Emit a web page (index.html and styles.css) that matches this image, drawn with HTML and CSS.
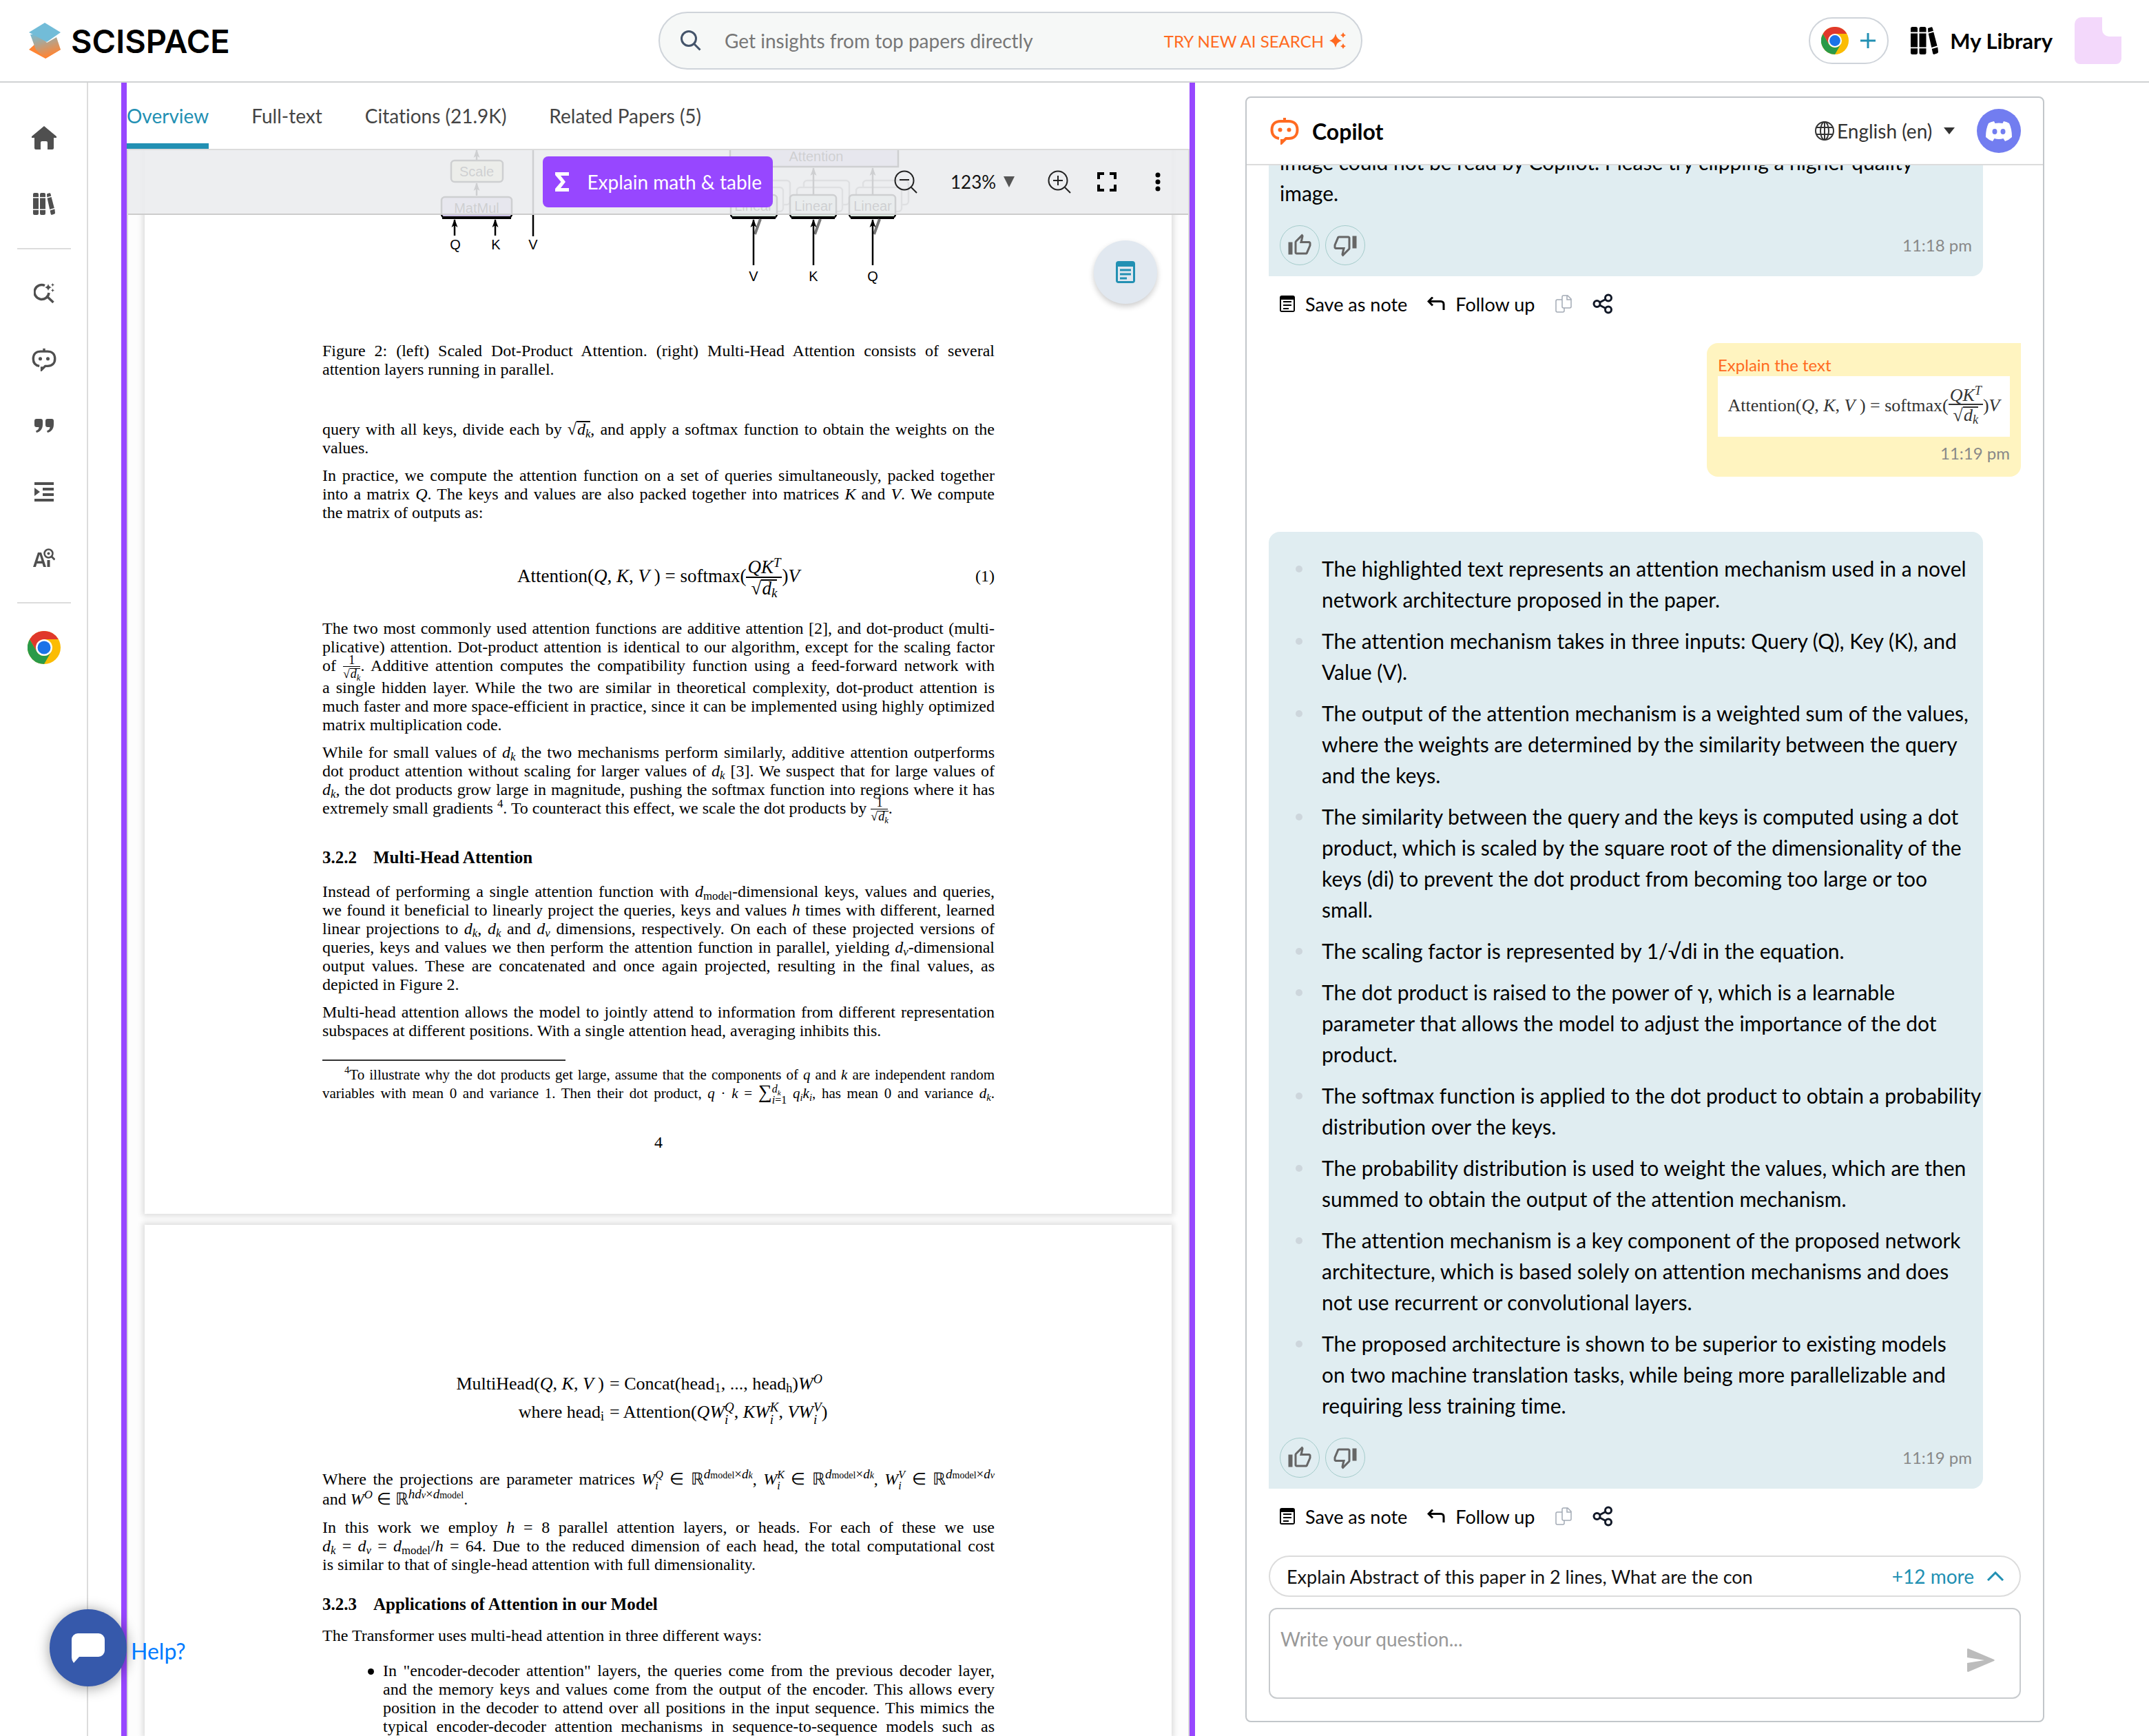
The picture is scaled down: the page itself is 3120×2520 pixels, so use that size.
FILE: index.html
```html
<!DOCTYPE html>
<html lang="en">
<head>
<meta charset="utf-8">
<title>SciSpace</title>
<link rel="stylesheet" href="styles.css">
</head>
<body>
<svg class="defs" aria-hidden="true">
  <defs>
    <linearGradient id="lg" x1="0" y1="0" x2="0.4" y2="1"><stop offset="0" stop-color="#74bcd6"/><stop offset="1" stop-color="#ff8534"/></linearGradient>
    <symbol id="chrome" viewBox="0 0 48 48">
      <circle cx="24" cy="24" r="24" fill="#fbbc04"/>
      <path d="M3.200 12L13.600 30A12 12 0 0 0 34.400 30L24 48A24 24 0 0 1 3.200 12z" fill="#2a9a48"/>
      <path d="M3.200 12A24 24 0 0 1 44.800 12H24L13.600 30z" fill="#e0382b"/>
      <circle cx="24" cy="24" r="12" fill="#fff"/>
      <circle cx="24" cy="24" r="9.500" fill="#1a73e8"/>
    </symbol>
    <symbol id="books" viewBox="0 0 32 32">
      <path d="M2 0h4a2 2 0 0 1 2 2v4H0V2a2 2 0 0 1 2-2zM0 7.500h8v16H0zM0 25h8v5a2 2 0 0 1-2 2H2a2 2 0 0 1-2-2zM12 0h4a2 2 0 0 1 2 2v4h-8V2a2 2 0 0 1 2-2zM10 7.500h8v16h-8zM10 25h8v5a2 2 0 0 1-2 2h-4a2 2 0 0 1-2-2zM20 1.500l3.500-1.200a1.500 1.500 0 0 1 1.900 1l.9 3.200-6 1.800zM20.600 7.800l6-1.800 4.200 16-6.600 2zM24.600 25.500l6.800-2 .6 5.500a2 2 0 0 1-1.400 1.800l-3 1a1.500 1.500 0 0 1-1.900-1z"/>
    </symbol>
    <symbol id="bot" viewBox="0 0 42 40">
      <path d="M21 1v5" stroke="currentColor" stroke-width="4" fill="none"/>
      <path d="M13 31C6 30 2.500 25 2.500 18.500C2.500 10 8 6 15 6h12c7 0 12.500 4 12.500 12.500S34 31 27 31h-4L17 37v-5" stroke="currentColor" stroke-width="4" fill="none"/>
      <circle cx="14.500" cy="18.500" r="3" fill="currentColor"/><circle cx="27.500" cy="18.500" r="3" fill="currentColor"/>
    </symbol>
    <symbol id="up" viewBox="0 0 24 24"><path d="M9 21h9c.83 0 1.540-.5 1.840-1.220l3.020-7.050c.09-.23.14-.47.14-.73v-2c0-1.100-.9-2-2-2h-6.310l.95-4.570.03-.32c0-.41-.17-.79-.44-1.060L14.170 1 7.580 7.590C7.220 7.950 7 8.450 7 9v10c0 1.100.9 2 2 2zM9 9l4.340-4.340L12 10h9v2l-3 7H9V9zM1 9h4v12H1z"/></symbol>
    <symbol id="down" viewBox="0 0 24 24"><path d="M15 3H6c-.83 0-1.540.5-1.840 1.220l-3.020 7.050c-.09.23-.14.47-.14.73v2c0 1.100.9 2 2 2h6.310l-.95 4.570-.03.32c0 .41.17.79.44 1.060L9.830 23l6.590-6.590c.36-.36.58-.86.58-1.410V5c0-1.100-.9-2-2-2zm0 12l-4.340 4.340L12 14H3v-2l3-7h9v10zm4-12h4v12h-4z"/></symbol>
    <symbol id="note" viewBox="0 0 22 24"><path fill-rule="evenodd" d="M3 0h16a3 3 0 0 1 3 3v18a3 3 0 0 1-3 3H3a3 3 0 0 1-3-3V3a3 3 0 0 1 3-3zM2 6v16h18V6zM5 8h12v2H5zM5 13h12v2H5zM5 18h8v2H5z"/></symbol>
    <symbol id="reply" viewBox="0 0 26 20"><path d="M8 0.500L2 6.500 8 12.500M2 6.500h18a4 4 0 0 1 4 4V19" fill="none" stroke="#000" stroke-width="3"/></symbol>
    <symbol id="copy" viewBox="0 0 26 26"><path d="M13 1h6l5 5v11a2 2 0 0 1-2 2H13a2 2 0 0 1-2-2V3a2 2 0 0 1 2-2zM18 1v6h6M11 7H4a2 2 0 0 0-2 2v14a2 2 0 0 0 2 2h8a2 2 0 0 0 2-2v-4" fill="none" stroke="#a3aab5" stroke-width="1.500"/></symbol>
    <symbol id="share" viewBox="0 0 30 30"><g fill="none" stroke="#111827" stroke-width="3"><circle cx="6.500" cy="15" r="4.500"/><circle cx="23" cy="6.500" r="4.500"/><circle cx="23" cy="23.500" r="4.500"/><path d="M10.500 13l8.500-4.500M10.500 17l8.500 4.500"/></g></symbol>
    <marker id="ah" viewBox="0 0 10 12" refX="5" refY="1" markerWidth="10" markerHeight="12" markerUnits="userSpaceOnUse"><path d="M5 0l4.500 12L5 9 .5 12z" fill="#000"/></marker>
  </defs>
</svg>

<header class="top">
  <a class="brand" href="#">
    <svg width="50" height="54" viewBox="0 0 50 54"><path d="M2 40L12 31l14 22zM48 40L26 53l14-24z" fill="#ff8534"/><path d="M4 18h14l10 12 14-8 6 18-22 13-14-13z" fill="url(#lg)"/><path d="M25 1l23 14-20 14L2 15z" fill="#72bcd8"/></svg>
    <span>SCISPACE</span>
  </a>
  <label class="search">
    <svg width="30" height="30" viewBox="0 0 30 30" fill="none" stroke="#44546a" stroke-width="3"><circle cx="12" cy="12" r="10.500"/><path d="M19.500 19.500l9 9"/></svg>
    <input type="text" placeholder="Get insights from top papers directly" aria-label="Search papers">
    <a href="#">TRY NEW AI SEARCH <svg width="24" height="24" viewBox="0 0 24 24" fill="#ff6a21"><path d="M9 2q1.800 8 9 10-7.200 2-9 10-1.800-8-9-10 7.200-2 9-10zM20 0q.8 3.200 4 4-3.200.8-4 4-.8-3.200-4-4 3.200-.8 4-4zM20 16q.8 3.200 4 4-3.200.8-4 4-.8-3.200-4-4 3.200-.8 4-4z"/></svg></a>
  </label>
  <nav class="account">
    <button class="ext" aria-label="Add to Chrome"><svg width="40" height="40"><use href="#chrome"/></svg><svg width="24" height="24" viewBox="0 0 24 24"><path d="M12 1v22M1 12h22" stroke="#2290b3" stroke-width="3"/></svg></button>
    <a class="library" href="#"><svg width="40" height="40"><use href="#books"/></svg>My Library</a>
    <svg class="avatar" width="68" height="68" viewBox="0 0 68 68"><path d="M10 0h30v18a10 10 0 0 0 10 10h18v32a8 8 0 0 1-8 8H8a8 8 0 0 1-8-8V10A10 10 0 0 1 10 0z" fill="#f3d8fb"/></svg>
  </nav>
</header>

<main class="shell">
  <nav class="side">
    <a href="#" aria-label="Home"><svg width="36" height="34" viewBox="0 0 36 34"><path d="M18 0L36 15v2h-4v15a2 2 0 0 1-2 2h-7V24a2 2 0 0 0-2-2h-6a2 2 0 0 0-2 2v10H6a2 2 0 0 1-2-2V17H0v-2z"/></svg></a>
    <a href="#" aria-label="Library"><svg width="32" height="32"><use href="#books"/></svg></a>
    <hr>
    <a href="#" aria-label="AI search"><svg width="30" height="30" viewBox="0 0 30 30"><path d="M16 3.500A10.500 10.500 0 1 0 22 14M20 20l8.500 8" fill="none" stroke="#4f4f4f" stroke-width="3.500"/><path d="M21 1q1 4.500 5 5-4 1-5 5-1-4-5-5 4-.5 5-5zM27.500 0l.8 1.700 1.700.8-1.700.8-.8 1.700-.8-1.700-1.700-.8 1.700-.8zM27.500 8l.8 1.700 1.700.8-1.700.8-.8 1.700-.8-1.700-1.700-.8 1.700-.8z"/></svg></a>
    <a href="#" aria-label="Copilot"><svg width="36" height="34"><use href="#bot"/></svg></a>
    <a href="#" aria-label="Citations"><svg width="28" height="20" viewBox="0 0 28 20"><path d="M3 0h6a3 3 0 0 1 3 3v5c0 7-4 11-9 12l-1-2.500c3-1 4.500-3 4.500-5.500H3a3 3 0 0 1-3-3V3a3 3 0 0 1 3-3zM19 0h6a3 3 0 0 1 3 3v5c0 7-4 11-9 12l-1-2.500c3-1 4.500-3 4.500-5.500H19a3 3 0 0 1-3-3V3a3 3 0 0 1 3-3z"/></svg></a>
    <a href="#" aria-label="Paraphraser"><svg width="28" height="28" viewBox="0 0 28 28"><path d="M0 0h28v4H0zM12 8h16v4H12zM12 16h16v4H12zM0 24h28v4H0zM0 8l8 6-8 6z"/></svg></a>
    <a href="#" aria-label="AI detector"><svg width="32" height="28" viewBox="0 0 32 28"><path fill-rule="evenodd" d="M0 27L7 6h5l7 21h-4l-1.500-5h-8L4 27zM6.500 18.500h6L9.500 9zM20.500 17h4v10h-4z"/><circle cx="22.500" cy="7.500" r="6" fill="none" stroke="#4f4f4f" stroke-width="2.500"/><circle cx="22.500" cy="7.500" r="2"/><path d="M27 12l4.500 4.500" stroke="#4f4f4f" stroke-width="3"/></svg></a>
    <hr>
    <a href="#" aria-label="Chrome extension"><svg width="48" height="48"><use href="#chrome"/></svg></a>
  </nav>

  <section class="reader">
    <nav class="tabs"><a class="on" href="#">Overview</a><a href="#">Full-text</a><a href="#">Citations (21.9K)</a><a href="#">Related Papers (5)</a></nav>
    <div class="viewer">
      <div class="toolbar">
        <button class="explain"><svg width="24" height="28" viewBox="0 0 24 28"><path d="M2 0h20v5H10l7 9-7 9h12v5H2v-4l8.500-10L2 4z" fill="#fff"/></svg>Explain math &amp; table</button>
        <div class="tools">
          <button aria-label="Zoom out"><svg width="34" height="34" viewBox="0 0 34 34" fill="none" stroke="#222" stroke-width="2"><circle cx="15" cy="15" r="13.500"/><path d="M8 14h14M25 25l8 8"/></svg></button>
          <span class="zoom"><select aria-label="Zoom level"><option>123%</option></select><svg width="16" height="16" viewBox="0 0 16 16"><path d="M0 0h16L8 16z" fill="#555"/></svg></span>
          <button aria-label="Zoom in"><svg width="34" height="34" viewBox="0 0 34 34" fill="none" stroke="#222" stroke-width="2"><circle cx="15" cy="15" r="13.500"/><path d="M8 15h14M15 8v14M25 25l8 8"/></svg></button>
          <button class="screen" aria-label="Full screen"><svg width="28" height="28" viewBox="0 0 28 28" fill="none" stroke="#000" stroke-width="4"><path d="M2 10V2h8M18 2h8v8M26 18v8h-8M10 26H2v-8"/></svg></button>
          <button aria-label="More"><svg width="8" height="28" viewBox="0 0 8 28"><circle cx="4" cy="4" r="3.500"/><circle cx="4" cy="14" r="3.500"/><circle cx="4" cy="24" r="3.500"/></svg></button>
        </div>
      </div>
      <button class="notes" aria-label="Notes"><svg width="28" height="32" viewBox="0 0 28 32"><rect width="28" height="32" rx="4" fill="#2290b3"/><path d="M3 8h22v21H3z" fill="#e1e8f0"/><path d="M6 13h16M6 19h16M6 25h10" stroke="#2290b3" stroke-width="3"/></svg></button>

      <article class="page first">
        <svg class="figure" width="976" height="278" viewBox="468 218 976 278" font-family="Liberation Sans" font-size="20" text-anchor="middle">
          <g fill="none" stroke="#000" stroke-width="2.500">
            <rect x="655" y="233" width="75" height="31" rx="5" fill="#f4f6c8"/>
            <rect x="641" y="286" width="102" height="30" rx="5" fill="#cfc4ea"/>
            <path d="M642 316h100" stroke-width="4"/>
            <g marker-end="url(#ah)"><path d="M692 284v-18"/><path d="M692 232v-14"/><path d="M660 342v-23"/><path d="M719 342v-23"/></g>
            <path d="M774 218v125"/>
            <path d="M1060 200h244v42h-244z" fill="#cfc4ea"/>
            <g fill="#fff" stroke="#888"><rect x="1081" y="262" width="66" height="35" rx="5"/><rect x="1167" y="262" width="66" height="35" rx="5"/><rect x="1253" y="262" width="66" height="35" rx="5"/><rect x="1071" y="272" width="66" height="35" rx="5"/><rect x="1157" y="272" width="66" height="35" rx="5"/><rect x="1243" y="272" width="66" height="35" rx="5"/></g>
            <g fill="#dcebe2"><rect x="1061" y="283" width="67" height="33" rx="5"/><rect x="1147" y="283" width="67" height="33" rx="5"/><rect x="1233" y="283" width="67" height="33" rx="5"/></g>
            <path d="M1063 316h63M1149 316h63M1235 316h63" stroke-width="4"/>
            <path d="M1104 318l-8 22M1191 318l-8 22M1277 318l-8 22" stroke="#777" stroke-width="4"/>
            <g marker-end="url(#ah)"><path d="M1181 282v-38"/><path d="M1267 282v-38"/><path d="M1094 385v-66"/><path d="M1181 385v-66"/><path d="M1267 385v-66"/></g>
          </g>
          <text x="692" y="256">Scale</text><text x="692" y="309">MatMul</text>
          <text x="661" y="362">Q</text><text x="720" y="362">K</text><text x="774" y="362">V</text>
          <text x="1185" y="234">Attention</text>
          <text x="1094" y="306">Linear</text><text x="1181" y="306">Linear</text><text x="1267" y="306">Linear</text>
          <text x="1094" y="408">V</text><text x="1181" y="408">K</text><text x="1267" y="408">Q</text>
        </svg>
        <p><span>Figure 2: (left) Scaled Dot-Product Attention. (right) Multi-Head Attention consists of several</span><span>attention layers running in parallel.</span></p>
        <p class="after-fig"><span>query with all keys, divide each by <span class="rt">√<i>d<sub>k</sub></i></span>, and apply a softmax function to obtain the weights on the</span><span>values.</span></p>
        <p><span>In practice, we compute the attention function on a set of queries simultaneously, packed together</span><span>into a matrix <i>Q</i>. The keys and values are also packed together into matrices <i>K</i> and <i>V</i>. We compute</span><span>the matrix of outputs as:</span></p>
        <div class="eq"><b></b><div class="formula">Attention(<i>Q</i>, <i>K</i>, <i>V</i> ) = softmax(<span class="fr"><span><i>QK<sup>T</sup></i></span><span class="rt">√<i>d<sub>k</sub></i></span></span>)<i>V</i></div><div>(1)</div></div>
        <p><span>The two most commonly used attention functions are additive attention [2], and dot-product (multi-</span><span>plicative) attention. Dot-product attention is identical to our algorithm, except for the scaling factor</span><span class="tall">of <span class="fr sm"><span>1</span><span class="rt">√<i>d<sub>k</sub></i></span></span>. Additive attention computes the compatibility function using a feed-forward network with</span><span>a single hidden layer. While the two are similar in theoretical complexity, dot-product attention is</span><span>much faster and more space-efficient in practice, since it can be implemented using highly optimized</span><span>matrix multiplication code.</span></p>
        <p><span>While for small values of <i>d<sub>k</sub></i> the two mechanisms perform similarly, additive attention outperforms</span><span>dot product attention without scaling for larger values of <i>d<sub>k</sub></i> [3]. We suspect that for large values of</span><span><i>d<sub>k</sub></i>, the dot products grow large in magnitude, pushing the softmax function into regions where it has</span><span>extremely small gradients <sup>4</sup>. To counteract this effect, we scale the dot products by <span class="fr sm"><span>1</span><span class="rt">√<i>d<sub>k</sub></i></span></span>.</span></p>
        <h3><span>3.2.2</span>Multi-Head Attention</h3>
        <p><span>Instead of performing a single attention function with <i>d</i><sub>model</sub>-dimensional keys, values and queries,</span><span>we found it beneficial to linearly project the queries, keys and values <i>h</i> times with different, learned</span><span>linear projections to <i>d<sub>k</sub></i>, <i>d<sub>k</sub></i> and <i>d<sub>v</sub></i> dimensions, respectively. On each of these projected versions of</span><span>queries, keys and values we then perform the attention function in parallel, yielding <i>d<sub>v</sub></i>-dimensional</span><span>output values. These are concatenated and once again projected, resulting in the final values, as</span><span>depicted in Figure 2.</span></p>
        <p><span>Multi-head attention allows the model to jointly attend to information from different representation</span><span>subspaces at different positions. With a single attention head, averaging inhibits this.</span></p>
        <p class="foot"><span class="ind"><sup>4</sup>To illustrate why the dot products get large, assume that the components of <i>q</i> and <i>k</i> are independent random</span><span class="just">variables with mean 0 and variance 1. Then their dot product, <i>q</i> · <i>k</i> = <span class="sum">∑</span><span class="ss"><i>d<sub>k</sub></i><span><i>i</i>=1</span></span> <i>q<sub>i</sub>k<sub>i</sub></i>, has mean 0 and variance <i>d<sub>k</sub></i>.</span></p>
        <div class="num">4</div>
      </article>

      <article class="page second">
        <div class="multi">
          <div>MultiHead(<i>Q</i>, <i>K</i>, <i>V</i> )</div><div>= Concat(head<sub>1</sub>, ..., head<sub>h</sub>)<i>W<sup>O</sup></i></div>
          <div>where head<sub>i</sub></div><div>= Attention(<i>QW</i><span class="ss"><i>Q</i><i>i</i></span>, <i>KW</i><span class="ss"><i>K</i><i>i</i></span>, <i>VW</i><span class="ss"><i>V</i><i>i</i></span>)</div>
        </div>
        <p><span class="just">Where the projections are parameter matrices <i>W</i><span class="ss"><i>Q</i><i>i</i></span> ∈ ℝ<sup class="dim"><i>d</i><small>model</small>×<i>d<small>k</small></i></sup>, <i>W</i><span class="ss"><i>K</i><i>i</i></span> ∈ ℝ<sup class="dim"><i>d</i><small>model</small>×<i>d<small>k</small></i></sup>, <i>W</i><span class="ss"><i>V</i><i>i</i></span> ∈ ℝ<sup class="dim"><i>d</i><small>model</small>×<i>d<small>v</small></i></sup></span><span>and <i>W<sup>O</sup></i> ∈ ℝ<sup class="dim"><i>hd<small>v</small></i>×<i>d</i><small>model</small></sup>.</span></p>
        <p><span>In this work we employ <i>h</i> = 8 parallel attention layers, or heads. For each of these we use</span><span><i>d<sub>k</sub></i> = <i>d<sub>v</sub></i> = <i>d</i><sub>model</sub>/<i>h</i> = 64. Due to the reduced dimension of each head, the total computational cost</span><span>is similar to that of single-head attention with full dimensionality.</span></p>
        <h3><span>3.2.3</span>Applications of Attention in our Model</h3>
        <p><span>The Transformer uses multi-head attention in three different ways:</span></p>
        <ul><li><p><span>In "encoder-decoder attention" layers, the queries come from the previous decoder layer,</span><span>and the memory keys and values come from the output of the encoder. This allows every</span><span>position in the decoder to attend over all positions in the input sequence. This mimics the</span><span class="just">typical encoder-decoder attention mechanisms in sequence-to-sequence models such as</span></p></li></ul>
      </article>
    </div>
  </section>

  <aside class="copilot">
    <header>
      <svg class="bot" width="42" height="40"><use href="#bot"/></svg><h2>Copilot</h2>
      <label class="lang"><svg width="28" height="28" viewBox="0 0 28 28" fill="none" stroke="#333" stroke-width="2"><circle cx="14" cy="14" r="13"/><ellipse cx="14" cy="14" rx="6" ry="13"/><path d="M14 1v26M2 9h24M2 19h24"/></svg><select aria-label="Language"><option>English (en)</option></select><svg width="16" height="10" viewBox="0 0 16 10"><path d="M0 0h16L8 10z" fill="#333"/></svg></label>
      <a class="discord" href="#" aria-label="Discord"><svg width="38" height="30" viewBox="0 0 38 30"><path d="M12 1Q7 2 4 4 0 12 0 24q4 4 10 6l2.500-4q6.500 2 13 0L28 30q6-2 10-6 0-12-4-20-3-2-8-3l-1.500 3q-5.500-1-11 0z" fill="#fff"/><ellipse cx="13" cy="16" rx="3.500" ry="4" fill="#727df0"/><ellipse cx="25" cy="16" rx="3.500" ry="4" fill="#727df0"/></svg></a>
    </header>
    <div class="chat">
      <div class="msg">
        <p>image could not be read by Copilot. Please try clipping a higher quality<br>image.</p>
        <div class="meta"><button aria-label="Like"><svg width="36" height="36"><use href="#up"/></svg></button><button aria-label="Dislike"><svg width="36" height="36"><use href="#down"/></svg></button><time>11:18 pm</time></div>
      </div>
      <div class="acts"><button><svg width="22" height="24"><use href="#note"/></svg>Save as note</button><button><svg width="26" height="20"><use href="#reply"/></svg>Follow up</button><button aria-label="Copy"><svg width="26" height="26"><use href="#copy"/></svg></button><button aria-label="Share"><svg width="30" height="30"><use href="#share"/></svg></button></div>
      <div class="mine"><div class="ask">Explain the text</div>
        <div class="clip">Attention(<i>Q</i>, <i>K</i>, <i>V</i> ) = softmax(<span class="fr"><span><i>QK<sup>T</sup></i></span><span class="rt">√<i>d<sub>k</sub></i></span></span>)<i>V</i></div>
        <time>11:19 pm</time></div>
      <div class="msg">
        <ul>
          <li>The highlighted text represents an attention mechanism used in a novel<br>network architecture proposed in the paper.</li>
          <li>The attention mechanism takes in three inputs: Query (Q), Key (K), and<br>Value (V).</li>
          <li>The output of the attention mechanism is a weighted sum of the values,<br>where the weights are determined by the similarity between the query<br>and the keys.</li>
          <li>The similarity between the query and the keys is computed using a dot<br>product, which is scaled by the square root of the dimensionality of the<br>keys (di) to prevent the dot product from becoming too large or too<br>small.</li>
          <li>The scaling factor is represented by 1/√di in the equation.</li>
          <li>The dot product is raised to the power of γ, which is a learnable<br>parameter that allows the model to adjust the importance of the dot<br>product.</li>
          <li>The softmax function is applied to the dot product to obtain a probability<br>distribution over the keys.</li>
          <li>The probability distribution is used to weight the values, which are then<br>summed to obtain the output of the attention mechanism.</li>
          <li>The attention mechanism is a key component of the proposed network<br>architecture, which is based solely on attention mechanisms and does<br>not use recurrent or convolutional layers.</li>
          <li>The proposed architecture is shown to be superior to existing models<br>on two machine translation tasks, while being more parallelizable and<br>requiring less training time.</li>
        </ul>
        <div class="meta"><button aria-label="Like"><svg width="36" height="36"><use href="#up"/></svg></button><button aria-label="Dislike"><svg width="36" height="36"><use href="#down"/></svg></button><time>11:19 pm</time></div>
      </div>
      <div class="acts"><button><svg width="22" height="24"><use href="#note"/></svg>Save as note</button><button><svg width="26" height="20"><use href="#reply"/></svg>Follow up</button><button aria-label="Copy"><svg width="26" height="26"><use href="#copy"/></svg></button><button aria-label="Share"><svg width="30" height="30"><use href="#share"/></svg></button></div>
    </div>
    <button class="suggest"><span class="q">Explain Abstract of this paper in 2 lines, What are the con</span><span class="m">+12 more</span><svg width="26" height="14" viewBox="0 0 26 14"><path d="M2 13L13 2l11 11" fill="none" stroke="#2290b3" stroke-width="3"/></svg></button>
    <div class="write"><textarea placeholder="Write your question..." aria-label="Your question"></textarea><button aria-label="Send"><svg width="40" height="34" viewBox="0 0 40 34"><path d="M0 1.500Q0-.5 2 .3L39 16q1.500 1 0 2L2 33.700Q0 34.500 0 32.500V21l25-4L0 13z" fill="#bcbcbc"/></svg></button></div>
  </aside>
</main>

<div class="help"><button aria-label="Open chat"><svg width="48" height="43" viewBox="0 0 48 43"><path d="M9 0h30a9 9 0 0 1 9 9v16a9 9 0 0 1-9 9H11L3 43Q0 39 0 35V9a9 9 0 0 1 9-9z" fill="#fff"/></svg></button><a href="#">Help?</a></div>
</body>
</html>
```
FILE: styles.css
```css
* { box-sizing: border-box; }
:root { --teal: #2290b3; --orange: #ff6a21; --line: #dcdcdc; --grey: #4f4f4f; }
body { margin: 0; height: 100vh; overflow: hidden; display: flex; flex-direction: column; background: #fff; color: #111; font-family: Lato, "Open Sans", sans-serif; font-size: 28px; font-variant-ligatures: none; }
button, input, select, textarea { font: inherit; color: inherit; background: none; border: 0; padding: 0; margin: 0; }
button { display: flex; align-items: center; }
a { color: inherit; text-decoration: none; }
svg { display: block; flex: none; }
.defs { position: absolute; width: 0; height: 0; }

.top { flex: none; height: 120px; border-bottom: 2px solid #d0d2d3; display: grid; grid-template-columns: 916px 1022px 1fr; align-items: center; padding: 0 40px; }
.brand { display: flex; align-items: center; gap: 13px; font-family: Inter, sans-serif; font-size: 47px; font-weight: 600; color: #000; }
.search { height: 84px; border: 2px solid #cfd4da; border-radius: 42px; background: #f6f8f7; display: flex; align-items: center; padding: 0 22px 0 30px; }
.search input { flex: 1; margin-left: 34px; outline: 0; }
.search input::placeholder { color: #777; opacity: 1; }
.search a { display: flex; align-items: center; gap: 8px; color: var(--orange); font-size: 24px; }
.account { display: flex; align-items: center; justify-content: flex-end; gap: 32px; }
.ext { height: 68px; border: 2px solid #cfd4da; border-radius: 34px; padding: 0 16px; gap: 16px; }
.library { display: flex; align-items: center; gap: 17px; font-weight: 700; font-size: 31px; color: #000; }

.shell { flex: 1; min-height: 0; display: grid; grid-template-columns: 128px minmax(0, 1607fr) minmax(0, 1233fr); padding-right: 152px; }
.side { border-right: 2px solid var(--line); display: flex; flex-direction: column; align-items: center; padding: 56px 0 0 2px; fill: var(--grey); color: var(--grey); }
.side a { height: 48px; margin-bottom: 48px; display: flex; align-items: center; justify-content: center; }
.side hr { width: 78px; height: 2px; border: 0; background: var(--line); margin: -8px 0 40px; }

.reader { margin-left: 48px; border: solid #9747ff; border-width: 0 8px; display: flex; flex-direction: column; min-height: 0; }
.tabs { flex: none; display: flex; gap: 62px; height: 98px; border-bottom: 2px solid var(--line); color: #444; }
.tabs a { display: flex; align-items: center; padding-top: 8px; border-bottom: 8px solid transparent; }
.tabs .on { color: var(--teal); border-color: var(--teal); }
.viewer { position: relative; flex: 1; min-height: 0; overflow: hidden; border: solid var(--line); border-width: 0 2px; padding: 0 24px; background: #fdfdfd; }
.toolbar { position: absolute; z-index: 2; inset: 0 0 auto 0; height: 94px; background: rgba(235, 236, 238, .88); border-bottom: 2px solid #ccc; display: flex; align-items: center; justify-content: flex-end; gap: 176px; padding-right: 40px; }
.explain { height: 74px; padding: 0 16px; gap: 24px; border-radius: 8px; background: #9747ff; color: #fff; }
.tools { display: flex; align-items: center; color: #111; }
.zoom { display: flex; align-items: center; gap: 10px; margin: 0 48px; font-size: 26px; }
.zoom select, .lang select { appearance: none; }
.screen { margin: 0 56px 0 38px; }
.notes { position: absolute; z-index: 3; top: 131px; right: 45px; width: 92px; height: 92px; justify-content: center; border-radius: 50%; background: #e1e8f0; box-shadow: 0 4px 8px #0003; }

.page { background: #fff; padding: 0 257px 0 258px; box-shadow: 0 0 8px 3px #0002; font: 24px/27px "Liberation Serif", serif; color: #000; font-variant-ligatures: common-ligatures; }
.first { height: 1544px; margin-bottom: 16px; }
.page p { margin: 0 0 13px; }
.page p > span { display: block; height: 27px; white-space: nowrap; text-align-last: justify; }
.page p > span:last-child:not(.just) { text-align-last: left; }
.page p > .tall { margin-bottom: 5px; }
.page .after-fig { margin-top: 60px; }
.page h3 { margin: 44px 0 23px; font-size: 25px; }
.page h3 span { margin-right: 24px; }
.second h3 { margin: 30px 0 19px; }
sub, sup { font-size: 70%; line-height: 0; }
sub { vertical-align: -4px; }
sup { vertical-align: 9px; }
.formula { font-size: 27px; }
.rt { white-space: nowrap; }
.rt > i { display: inline-block; line-height: .85em; border-top: 2px solid; padding-left: 1px; }
.fr { display: inline-flex; flex-direction: column; align-items: center; vertical-align: middle; margin: -20px 0; }
.fr > span:first-child { border-bottom: 2px solid; padding: 0 2px; }
.fr > span + span { margin-top: 2px; }
.fr.sm { font-size: 18px; line-height: 17px; }
.fr.sm > span:first-child { border-bottom-width: 1px; padding: 0 8px; }
.sm > .rt > i { border-top-width: 1px; }
.ss { display: inline-flex; flex-direction: column; vertical-align: middle; font-size: 16px; line-height: 16px; margin: -8px 0; }
.multi .ss { font-size: 19px; line-height: 18px; }
.sum { font-size: 28px; line-height: 0; }
.dim { font-size: 19px; }
.dim small { font-size: 14px; }
.eq { display: grid; grid-template-columns: 1fr auto 1fr; align-items: center; height: 141px; margin-top: -13px; padding-top: 16px; }
.eq > :last-child { text-align: right; }
.page .foot { margin-top: 28px; font-size: 21px; line-height: 26px; }
.page .foot::before { content: ""; display: block; width: 353px; height: 2px; background: #333; margin-bottom: 7px; }
.foot .ind { padding-left: 32px; }
.num { text-align: center; margin-top: 44px; }
.multi { display: grid; grid-template-columns: 409px 1fr; gap: 14px 8px; padding: 217px 0 71px; font-size: 26px; white-space: nowrap; }
.multi > :nth-child(odd) { text-align: right; }
.multi > div { height: 27px; }
.multi + p > .just { margin-bottom: 2px; }
.multi + p { margin-bottom: 14px; }
.page ul { list-style: none; margin: 24px 0 0; padding: 0 0 0 88px; }
.page li { position: relative; }
.page li::before { content: ""; position: absolute; left: -22px; top: 10px; width: 9px; height: 9px; border-radius: 50%; background: #000; }

.copilot { margin: 20px 0 20px 73px; border: 2px solid #c2c6ca; border-radius: 8px; display: flex; flex-direction: column; min-height: 0; padding-bottom: 32px; }
.copilot > header { flex: none; height: 98px; border-bottom: 2px solid var(--line); padding: 0 32px 0 34px; display: flex; align-items: center; }
.copilot h2 { margin: 0 auto 0 19px; font-size: 32px; color: #000; }
.bot { color: var(--orange); }
.lang { display: flex; align-items: center; gap: 4px; color: #333; margin-right: 32px; }
.lang select { margin-right: 12px; }
.discord { width: 64px; height: 64px; border-radius: 50%; background: #727df0; display: flex; align-items: center; justify-content: center; }
.chat { flex: 1; min-height: 0; overflow: hidden; display: flex; flex-direction: column; justify-content: flex-end; padding: 0 32px; }
.chat > * { flex: none; }
.msg { margin-right: 55px; padding: 31px 16px 16px; border-radius: 16px 16px 16px 0; background: #e0edf1; font-size: 30px; line-height: 45px; white-space: nowrap; color: #000; }
.msg p { margin: 0 0 24px; }
.msg ul { list-style: none; margin: 0 0 24px; padding: 0 0 0 61px; display: grid; gap: 15px; }
.msg li { position: relative; }
.msg li::before { content: ""; position: absolute; left: -38px; top: 18px; width: 10px; height: 10px; border-radius: 50%; background: #cdd6dc; }
.meta { display: flex; align-items: center; gap: 8px; }
.meta button { width: 58px; height: 58px; justify-content: center; border: 1px solid #a5cccb; border-radius: 50%; fill: #666; }
time { margin-left: auto; font-size: 24px; line-height: 32px; color: #888; }
.acts { display: flex; align-items: center; height: 40px; margin: 20px 16px 37px; font-size: 27px; gap: 29px; color: #000; }
.acts button { gap: 15px; }
.mine { align-self: flex-end; width: 456px; height: 194px; margin-bottom: 80px; padding: 16px; border-radius: 16px 0 16px 16px; background: #fff4c0; display: flex; flex-direction: column; }
.ask { color: var(--orange); font-size: 24px; line-height: 32px; }
.clip { height: 88px; margin-bottom: 8px; padding-bottom: 4px; background: #fff; display: flex; align-items: center; justify-content: center; font: 26px/25px "Liberation Serif", serif; white-space: pre; color: #333; }
.suggest { flex: none; height: 60px; margin: 0 32px 16px; border: 2px solid var(--line); border-radius: 30px; padding: 0 22px 0 24px; font-size: 28px; color: #111; }
.q { width: 694px; overflow: hidden; white-space: nowrap; text-align: left; font-size: 27px; }
.m { margin: 0 18px 0 auto; color: var(--teal); }
.write { flex: none; height: 132px; margin: 0 32px; border: 2px solid #c8cbce; border-radius: 12px; display: flex; align-items: center; padding: 0 36px 0 15px; }
.write textarea { flex: 1; height: 88px; padding-top: 6px; resize: none; outline: 0; }
.write textarea::placeholder { color: #999; opacity: 1; }
.write button { margin-top: 20px; }

.help { position: absolute; z-index: 5; left: 72px; bottom: 72px; display: flex; align-items: center; gap: 6px; font-size: 32px; color: #007bff; }
.help a { padding-top: 8px; }
.help button { width: 112px; height: 112px; justify-content: center; border-radius: 50%; background: #3659ab; box-shadow: 0 2px 20px #0006; }
```
